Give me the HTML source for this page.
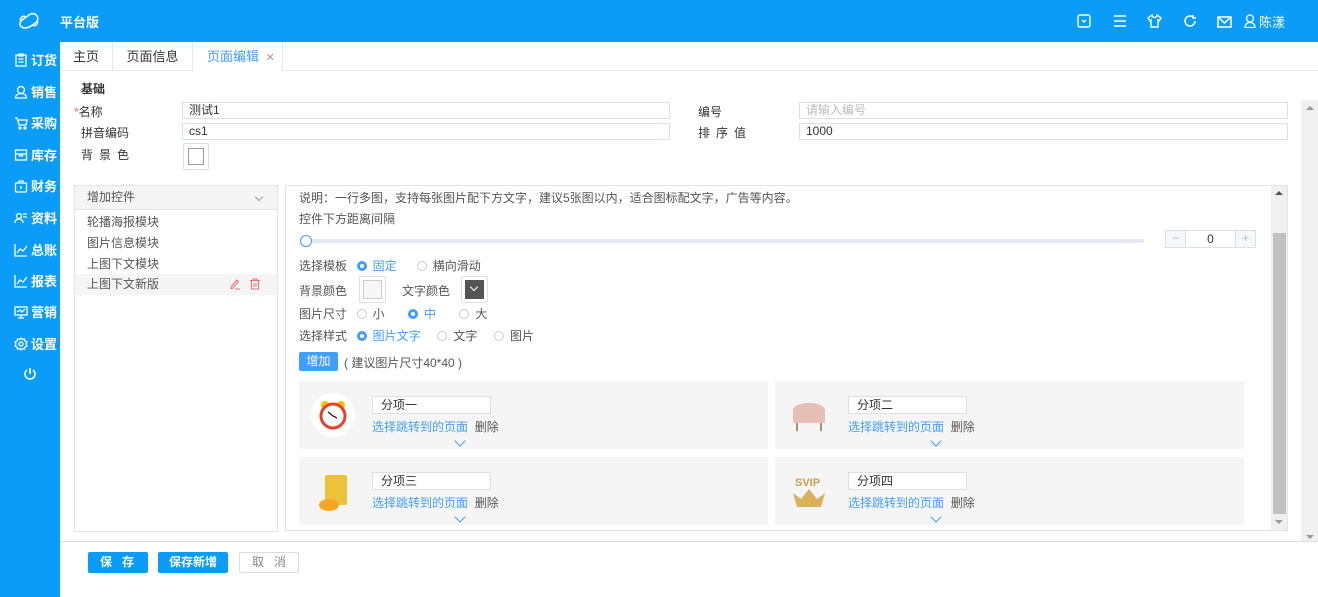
<!DOCTYPE html>
<html><head><meta charset="utf-8"><style>
*{box-sizing:border-box;margin:0;padding:0}
body{width:1318px;height:597px;overflow:hidden;position:relative;background:#fff;font-family:"Liberation Sans","Noto Sans CJK SC",sans-serif;font-size:12px;color:#333}
.a{position:absolute}
.top{left:0;top:0;width:1318px;height:42px;background:#0a9cf6}
.side{left:0;top:42px;width:60px;height:555px;background:#0a9cf6}
.si{left:0;width:60px;color:#fff;font-size:13px;font-weight:bold;padding-left:14px;display:flex;align-items:center;gap:3px}
.si svg{width:14px;height:14px}
.inp{border:1px solid #dcdfe6;height:17px;font-size:12px;padding-left:6px;line-height:15px;background:#fff}
.lbl{font-size:12px;color:#333}
.rad{display:inline-block;width:10px;height:10px;border:1px solid #ccc;border-radius:50%;vertical-align:-1px;margin-right:6px}
.rad.on{border:3px solid #409eff;background:#fff}
.blue{color:#409eff}
.card{background:#f5f5f5;height:68px}
.card .t{left:73px;top:15px;width:119px;height:18px;border:1px solid #dcdfe6;background:#fff;padding-left:8px;line-height:16px;font-size:12px}
.card .l{left:73px;top:37px;font-size:12px}
.card .ch{left:157px;top:56px;width:8px;height:8px;border-right:1px solid #409eff;border-bottom:1px solid #409eff;transform:rotate(45deg)}
.img{left:12px;top:12px;width:44px;height:44px;border-radius:50%;background:#fff}
.btn{height:21px;line-height:21px;text-align:center;font-size:12px;border-radius:2px}
</style></head><body>
<div class="a top"></div>
<svg class="a" style="left:18px;top:11px" width="22" height="20" viewBox="0 0 22 20"><path d="M7 17c-4 0-6-3-4.5-6S9 6 11 4s6-2 8 1 0 6-3 8-5 4-9 4z M8 6c-3-2-7 1-5 5 M14 14c3 2 7-1 5-5" fill="none" stroke="#fff" stroke-width="1.5"/></svg>
<div class="a" style="left:60px;top:12px;color:#fff;font-size:13px;font-weight:bold">平台版</div>
<svg class="a" style="left:1077px;top:14px" width="14" height="14" viewBox="0 0 14 14" fill="none" stroke="#fff" stroke-width="1.4"><rect x="1" y="1" width="12" height="12" rx="2"/><path d="M5 6l2 2 2-2"/></svg>
<svg class="a" style="left:1113px;top:14px" width="14" height="14" viewBox="0 0 14 14" stroke="#fff" stroke-width="1.5"><path d="M1 2h12M1 7h12M1 12h12"/></svg>
<svg class="a" style="left:1147px;top:14px" width="15" height="14" viewBox="0 0 15 14" fill="none" stroke="#fff" stroke-width="1.4"><path d="M5 1L1 4l2 3 1-1v7h7V6l1 1 2-3-4-3c0 1.5-1 2.5-2.5 2.5S5 2.5 5 1z"/></svg>
<svg class="a" style="left:1183px;top:14px" width="14" height="14" viewBox="0 0 14 14" fill="none" stroke="#fff" stroke-width="1.5"><path d="M12 7a5 5 0 1 1-2-4M10 1v3h3"/></svg>
<svg class="a" style="left:1217px;top:16px" width="15" height="12" viewBox="0 0 15 12" fill="none" stroke="#fff" stroke-width="1.5"><rect x="1" y="1" width="13" height="10"/><path d="M1 1l6.5 6L14 1"/></svg>
<svg class="a" style="left:1244px;top:14px" width="12" height="14" viewBox="0 0 12 14" fill="none" stroke="#fff" stroke-width="1.3"><circle cx="6" cy="4.5" r="3.5"/><path d="M1 13.5c0-3 2-5 5-5s5 2 5 5z"/></svg>
<div class="a" style="left:1259px;top:12px;color:#fff;font-size:13px">陈漾</div>

<div class="a side"></div>
<div class="a si" style="top:50px"><svg viewBox="0 0 14 14" fill="none" stroke="#fff" stroke-width="1.3"><rect x="2" y="2" width="10" height="11"/><path d="M5 1h4v2H5zM4.5 6h5M4.5 9h5"/></svg>订货</div>
<div class="a si" style="top:82px"><svg viewBox="0 0 14 14" fill="none" stroke="#fff" stroke-width="1.3"><circle cx="7" cy="5" r="3.5"/><path d="M1.5 13c0-3 2.5-4.5 5.5-4.5s5.5 1.5 5.5 4.5z"/></svg>销售</div>
<div class="a si" style="top:113px"><svg viewBox="0 0 14 14" fill="none" stroke="#fff" stroke-width="1.3"><path d="M1 2h2l2 7h7l1-5H4"/><circle cx="6" cy="12" r="1"/><circle cx="11" cy="12" r="1"/></svg>采购</div>
<div class="a si" style="top:145px"><svg viewBox="0 0 14 14" fill="none" stroke="#fff" stroke-width="1.3"><rect x="1.5" y="2" width="11" height="10"/><path d="M1.5 6h11M5.5 6v2h3V6"/></svg>库存</div>
<div class="a si" style="top:176px"><svg viewBox="0 0 14 14" fill="none" stroke="#fff" stroke-width="1.3"><rect x="1.5" y="4" width="11" height="9" rx="1"/><path d="M5 4V2h4v2M7 7v3"/></svg>财务</div>
<div class="a si" style="top:208px"><svg viewBox="0 0 14 14" fill="none" stroke="#fff" stroke-width="1.3"><circle cx="5" cy="5" r="2.5"/><path d="M1 12c0-3 2-4 4-4s4 1 4 4M9 3h4M9 6h4"/></svg>资料</div>
<div class="a si" style="top:240px"><svg viewBox="0 0 14 14" fill="none" stroke="#fff" stroke-width="1.3"><path d="M1 1v12h12M3 10l3-4 3 2 4-5"/></svg>总账</div>
<div class="a si" style="top:271px"><svg viewBox="0 0 14 14" fill="none" stroke="#fff" stroke-width="1.3"><path d="M1 1v12h12M3 10l3-4 3 2 4-5"/></svg>报表</div>
<div class="a si" style="top:302px"><svg viewBox="0 0 14 14" fill="none" stroke="#fff" stroke-width="1.3"><rect x="1" y="2" width="12" height="8"/><path d="M4 13h6M7 10v3M3 7l3-2 2 2 3-3"/></svg>营销</div>
<div class="a si" style="top:334px"><svg viewBox="0 0 14 14" fill="none" stroke="#fff" stroke-width="1.3"><circle cx="7" cy="7" r="2"/><path d="M7 1l1.5 1.5 2-.5.5 2 2 1-1 2 1 2-2 1-.5 2-2-.5L7 13l-1.5-1.5-2 .5-.5-2-2-1 1-2-1-2 2-1 .5-2 2 .5z"/></svg>设置</div>
<svg class="a" style="left:23px;top:367px" width="14" height="14" viewBox="0 0 14 14" fill="none" stroke="#fff" stroke-width="1.6"><path d="M7 1v6M4 3a5 5 0 1 0 6 0"/></svg>

<!-- tabs -->
<div class="a" style="left:60px;top:70px;width:1258px;height:1px;background:#e4e7ed"></div>
<div class="a" style="left:60px;top:42px;width:53px;height:29px;border-right:1px solid #e4e7ed;line-height:29px;text-align:center;font-size:13px">主页</div>
<div class="a" style="left:113px;top:42px;width:80px;height:29px;border-right:1px solid #e4e7ed;line-height:29px;text-align:center;font-size:13px">页面信息</div>
<div class="a" style="left:193px;top:42px;width:90px;height:29px;border-right:1px solid #e4e7ed;background:#fff;line-height:29px;padding-left:14px;font-size:13px;color:#409eff">页面编辑 <span style="color:#999;font-size:11px;margin-left:3px">✕</span></div>

<div class="a" style="left:81px;top:80px;font-weight:bold;font-size:12px">基础</div>
<div class="a lbl" style="left:74px;top:103px"><span style="color:#f56c6c">*</span>名称</div>
<div class="a inp" style="left:182px;top:102px;width:488px">测试1</div>
<div class="a lbl" style="left:81px;top:124px">拼音编码</div>
<div class="a inp" style="left:182px;top:123px;width:488px">cs1</div>
<div class="a lbl" style="left:81px;top:146px;letter-spacing:6px">背景色</div>
<div class="a" style="left:183px;top:143px;width:26px;height:27px;border:1px solid #dcdfe6;border-radius:2px;padding:4px"><div style="width:16px;height:17px;border:1px solid #999"></div></div>
<div class="a lbl" style="left:698px;top:103px">编号</div>
<div class="a inp" style="left:799px;top:102px;width:489px;color:#bbb">请输入编号</div>
<div class="a lbl" style="left:698px;top:124px;letter-spacing:6px">排序值</div>
<div class="a inp" style="left:799px;top:123px;width:489px">1000</div>

<!-- outer scrollbar -->
<div class="a" style="left:1301px;top:100px;width:17px;height:441px;background:#f0f0f0"></div>
<div class="a" style="left:1306px;top:106px;border:4px solid transparent;border-bottom:4px solid #999;border-top:0"></div>
<div class="a" style="left:1306px;top:535px;border:4px solid transparent;border-top:4px solid #999;border-bottom:0"></div>

<!-- left panel -->
<div class="a" style="left:74px;top:185px;width:204px;height:347px;border:1px solid #e4e4e4"></div>
<div class="a" style="left:75px;top:186px;width:202px;height:24px;background:#f5f5f5;border-bottom:1px solid #e4e4e4;padding-left:12px;line-height:23px;color:#555">增加控件</div>
<div class="a" style="left:256px;top:194px;width:6px;height:6px;border-right:1px solid #999;border-bottom:1px solid #999;transform:rotate(45deg)"></div>
<div class="a" style="left:87px;top:213px;color:#555">轮播海报模块</div>
<div class="a" style="left:87px;top:234px;color:#555">图片信息模块</div>
<div class="a" style="left:87px;top:255px;color:#555">上图下文模块</div>
<div class="a" style="left:75px;top:274px;width:202px;height:21px;background:#f5f5f5;padding-left:12px;line-height:20px;color:#555">上图下文新版</div>
<svg class="a" style="left:229px;top:278px" width="12" height="12" viewBox="0 0 12 12" fill="none" stroke="#f56c6c" stroke-width="1"><path d="M2 9l6-7 1.5 1.5-6 7H2zM6 11h5"/></svg>
<svg class="a" style="left:249px;top:278px" width="12" height="12" viewBox="0 0 12 12" fill="none" stroke="#f56c6c" stroke-width="1"><path d="M1 2.5h10M4 2.5V1h4v1.5M2.5 2.5V11h7V2.5M5 5v4M7 5v4"/></svg>

<!-- right panel -->
<div class="a" style="left:285px;top:185px;width:1003px;height:346px;border:1px solid #e4e4e4"></div>
<div class="a" style="left:1271px;top:186px;width:16px;height:344px;background:#f0f0f0"></div>
<div class="a" style="left:1273px;top:233px;width:13px;height:281px;background:#c1c1c1"></div>
<div class="a" style="left:1275px;top:191px;border:4px solid transparent;border-bottom:4px solid #555;border-top:0"></div>
<div class="a" style="left:1275px;top:520px;border:4px solid transparent;border-top:4px solid #999;border-bottom:0"></div>

<div class="a" style="left:299px;top:189px;color:#555">说明：一行多图，支持每张图片配下方文字，建议5张图以内，适合图标配文字，广告等内容。</div>
<div class="a" style="left:299px;top:210px;color:#555">控件下方距离间隔</div>
<div class="a" style="left:305px;top:239px;width:839px;height:4px;background:#e4e7ed;border-radius:2px"></div>
<div class="a" style="left:300px;top:235px;width:12px;height:12px;border:1px solid #409eff;border-radius:50%;background:#fff"></div>
<div class="a" style="left:1165px;top:230px;width:91px;height:18px;border:1px solid #dcdfe6;background:#fff"></div>
<div class="a" style="left:1166px;top:231px;width:20px;height:16px;background:#f5f7fa;border-right:1px solid #dcdfe6;color:#bbb;text-align:center;line-height:15px">−</div>
<div class="a" style="left:1235px;top:231px;width:20px;height:16px;background:#f5f7fa;border-left:1px solid #dcdfe6;color:#bbb;text-align:center;line-height:15px">+</div>
<div class="a" style="left:1186px;top:232px;width:49px;text-align:center;color:#333">0</div>

<div class="a" style="left:299px;top:257px;color:#555">选择模板 &nbsp;<span class="rad on" style="margin-left:3px"></span><span class="blue">固定</span> &nbsp; &nbsp; &nbsp;<span class="rad"></span>横向滑动</div>
<div class="a" style="left:299px;top:282px;color:#555">背景颜色</div>
<div class="a" style="left:359px;top:276px;width:27px;height:27px;border:1px solid #dcdfe6;border-radius:2px;padding:3px"><div style="width:19px;height:19px;border:1px solid #ccc;background:#f7f7f7"></div></div>
<div class="a" style="left:402px;top:282px;color:#555">文字颜色</div>
<div class="a" style="left:461px;top:276px;width:27px;height:27px;border:1px solid #dcdfe6;border-radius:2px;padding:3px"><div style="width:19px;height:19px;background:#555;position:relative"><div style="position:absolute;left:6px;top:4px;width:6px;height:6px;border-right:1.5px solid #fff;border-bottom:1.5px solid #fff;transform:rotate(45deg)"></div></div></div>
<div class="a" style="left:299px;top:305px;color:#555">图片尺寸 &nbsp;<span class="rad" style="margin-left:3px"></span>小 &nbsp; &nbsp; &nbsp; <span class="rad on"></span><span class="blue">中</span> &nbsp; &nbsp; &nbsp; <span class="rad"></span>大</div>
<div class="a" style="left:299px;top:327px;color:#555">选择样式 &nbsp;<span class="rad on" style="margin-left:3px"></span><span class="blue">图片文字</span> &nbsp; &nbsp; <span class="rad"></span>文字 &nbsp; &nbsp; <span class="rad"></span>图片</div>
<div class="a btn" style="left:299px;top:352px;width:39px;height:19px;line-height:19px;background:#409eff;color:#fff">增加</div>
<div class="a" style="left:344px;top:354px;color:#555">( 建议图片尺寸40*40 )</div>

<div class="a card" style="left:299px;top:381px;width:469px">
<div class="a img"><svg width="44" height="44" viewBox="0 0 44 44"><circle cx="14" cy="12" r="4" fill="#f5c400"/><circle cx="30" cy="12" r="4" fill="#f5c400"/><circle cx="22" cy="23" r="12" fill="#fff" stroke="#e8402a" stroke-width="3"/><path d="M22 23l-5-4M22 23l4 2" stroke="#222" stroke-width="1.3"/></svg></div>
<div class="a t">分项一</div><div class="a l"><span class="blue">选择跳转到的页面</span> &nbsp;<span style="color:#555">删除</span></div><div class="a ch"></div></div>
<div class="a card" style="left:775px;top:381px;width:469px">
<div class="a img" style="background:transparent"><svg width="44" height="44" viewBox="0 0 44 44"><path d="M6 18c0-6 8-8 16-8s16 2 16 8v12H6z" fill="#e6bfb6"/><path d="M10 30v8M34 30v8" stroke="#b08a70" stroke-width="2"/></svg></div>
<div class="a t">分项二</div><div class="a l"><span class="blue">选择跳转到的页面</span> &nbsp;<span style="color:#555">删除</span></div><div class="a ch"></div></div>
<div class="a card" style="left:299px;top:457px;width:469px">
<div class="a img" style="background:transparent"><svg width="44" height="44" viewBox="0 0 44 44"><rect x="14" y="6" width="22" height="30" rx="2" fill="#eec13a"/><ellipse cx="18" cy="36" rx="10" ry="6" fill="#f5a623"/></svg></div>
<div class="a t">分项三</div><div class="a l"><span class="blue">选择跳转到的页面</span> &nbsp;<span style="color:#555">删除</span></div><div class="a ch"></div></div>
<div class="a card" style="left:775px;top:457px;width:469px">
<div class="a img" style="background:transparent"><svg width="44" height="44" viewBox="0 0 44 44"><text x="8" y="17" font-family="Liberation Sans" font-weight="bold" font-size="11" fill="#c9a04a">SVIP</text><path d="M6 24l8 6 8-10 8 10 8-6-4 14H10z" fill="#d9b25a"/></svg></div>
<div class="a t">分项四</div><div class="a l"><span class="blue">选择跳转到的页面</span> &nbsp;<span style="color:#555">删除</span></div><div class="a ch"></div></div>

<div class="a" style="left:60px;top:541px;width:1258px;height:1px;background:#ddd"></div>
<div class="a btn" style="left:88px;top:552px;width:60px;background:#0a9cf6;color:#fff;font-weight:bold;letter-spacing:10px;padding-left:8px">保存</div>
<div class="a btn" style="left:158px;top:552px;width:70px;background:#0a9cf6;color:#fff;font-weight:bold">保存新增</div>
<div class="a btn" style="left:239px;top:552px;width:60px;border:1px solid #ddd;color:#888;letter-spacing:10px;padding-left:10px;line-height:19px">取消</div>
</body></html>
